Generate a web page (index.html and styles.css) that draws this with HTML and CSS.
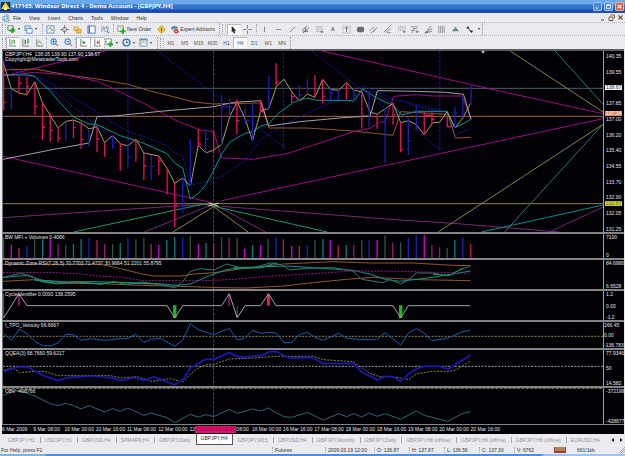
FILE: index.html
```html
<!DOCTYPE html>
<html lang="en">
<head>
<meta charset="utf-8">
<title>417165: Windsor Direct 4 - Demo Account - [GBPJPY,H4]</title>
<link rel="stylesheet" href="styles.css">
</head>
<body>
<header class="titlebar">
  <svg class="app-icon" viewBox="0 0 9 9"><rect width="9" height="9" fill="#25313a"/><path d="M4.5 0L9 7H0z" fill="#f4d12c"/><path d="M3 5h3v3H3z" fill="#fff2a0"/></svg>
  <h1>417165: Windsor Direct 4 - Demo Account - [GBPJPY,H4]</h1>
  <div class="window-buttons">
    <button class="wb" aria-label="Minimize"><svg viewBox="0 0 9 9"><path d="M2 6.5h3" stroke="#fff" stroke-width="1.4"/></svg></button>
    <button class="wb" aria-label="Maximize"><svg viewBox="0 0 9 9"><path d="M2 2.5h5v4.500H2z" fill="none" stroke="#fff"/><path d="M2 2.500h5" stroke="#fff" stroke-width="1.500"/></svg></button>
    <button class="wb close" aria-label="Close"><svg viewBox="0 0 9 9"><path d="M2 2l5 5M7 2L2 7" stroke="#fff" stroke-width="1.400"/></svg></button>
  </div>
</header>

<nav class="menubar">
  <svg class="menu-icon" viewBox="0 0 9 9"><path d="M1 3h5v4H1z" fill="#fff" stroke="#5a9ac8"/><path d="M3 1h4v3" fill="none" stroke="#5fa55f"/><path d="M2 5.500h6v2.500H3z" fill="#e9f4fb" stroke="#3f80b8" stroke-width=".8"/></svg>
  <button>File</button><button>View</button><button>Insert</button><button>Charts</button><button>Tools</button><button>Window</button><button>Help</button>
  <div class="mdi-buttons">
    <button aria-label="Minimize chart"><svg viewBox="0 0 9 9"><path d="M3 7h3" stroke="#7a6040" stroke-width="1.200"/></svg></button>
    <button aria-label="Restore chart"><svg viewBox="0 0 9 9"><path d="M3.500 2h4v3M2 4h4v3.500H2z" fill="none" stroke="#7a6040"/></svg></button>
    <button aria-label="Close chart"><svg viewBox="0 0 9 9"><path d="M2.500 2.500l4 4M6.500 2.500l-4 4" stroke="#7a6040" stroke-width="1.500"/></svg></button>
  </div>
</nav>

<div class="toolbar">
  <i class="grip"></i>
  <button class="tool drop" aria-label="New chart"><svg viewBox="0 0 10 10"><path d="M1 1h6v5H1z" fill="#fff" stroke="#3f8a4c"/><path d="M6 3v6M3 6h6" stroke="#1fa52c" stroke-width="2.200"/></svg></button>
  <button class="tool drop" aria-label="Profiles"><svg viewBox="0 0 10 10"><path d="M1 1h6v5H1z" fill="#cfe4f6" stroke="#5b93c5"/><path d="M3 4h6v5H3z" fill="#fff" stroke="#4c87bd"/></svg></button>
  <i class="sep"></i>
  <div class="group five">
    <button class="tool" aria-label="Market watch"><svg viewBox="0 0 10 10"><path d="M1 1h8v8H1z" fill="#eef6fb" stroke="#5b93c5"/><path d="M3 5l2-2 1 2" stroke="#2a9a3a" fill="none"/><path d="M5 7l2-2 1 2" stroke="#d07a30" fill="none"/></svg></button>
    <button class="tool" aria-label="Data window"><svg viewBox="0 0 10 10"><circle cx="5" cy="5" r="2.500" fill="none" stroke="#777"/><path d="M5 0v4M5 6v4M0 5h4M6 5h4" stroke="#777"/></svg></button>
    <button class="tool" aria-label="Navigator"><svg viewBox="0 0 10 10"><path d="M1 2h4l1 1v3H1z" fill="#f5d26a" stroke="#c49327" stroke-width=".7"/><path d="M4 5h5v4H4z" fill="#f0bf45" stroke="#b58420" stroke-width=".7"/></svg></button>
    <button class="tool" aria-label="Terminal"><svg viewBox="0 0 10 10"><path d="M1 1h8v8H1z" fill="#fff" stroke="#3f77b5"/><path d="M2.500 1v8" stroke="#3f77b5" stroke-width="1.600"/></svg></button>
    <button class="tool" aria-label="Strategy tester"><svg viewBox="0 0 10 10"><path d="M1 1v7M3 1v5M6 1v3M8 1v4" stroke="#9aa0a8"/><circle cx="5.500" cy="5" r="2" fill="#e7f0f8" stroke="#5580a8" stroke-width=".8"/><path d="M7 7l2 2" stroke="#5580a8" stroke-width="1.400"/></svg></button>
  </div>
  <i class="sep"></i>
  <button class="tool text"><svg viewBox="0 0 10 10"><path d="M1 1h6v6H1z" fill="#fff" stroke="#8a8a70"/><path d="M2.500 3h3" stroke="#999"/><path d="M6.500 4v6M3.500 7h6" stroke="#1fa52c" stroke-width="2"/></svg>New Order</button>
  <button class="tool" aria-label="MetaEditor"><svg viewBox="0 0 10 10"><path d="M5 .5L9.500 5 5 9.500.5 5z" fill="#f3c43a" stroke="#c08a1a" stroke-width=".7"/><path d="M5 3v4" stroke="#8a5c10" stroke-width="1.300"/></svg></button>
  <button class="tool text"><svg viewBox="0 0 10 10"><path d="M1 5q0-4 4-4t4 3z" fill="#4f8fce"/><path d="M2 5h4v4z" fill="#e9b26a"/><circle cx="7" cy="7" r="2.500" fill="#d8382c"/><path d="M6 7h2" stroke="#fff"/></svg>Expert Advisors</button>
  <i class="edge"></i><i class="grip"></i>
  <button class="tool pressed" aria-label="Cursor"><svg viewBox="0 0 10 10"><path d="M3 1l5 5H6l1 3-1.500.5L4.300 7 3 8z" fill="#222"/></svg></button>
  <button class="tool" aria-label="Crosshair"><svg viewBox="0 0 10 10"><path d="M5 0v4M5 6v4M0 5h4M6 5h4" stroke="#777"/></svg></button>
  <i class="sep"></i>
  <div class="group draw">
    <button class="tool" aria-label="Vertical line"><svg viewBox="0 0 10 10"><path d="M5 2v6" stroke="#777"/></svg></button>
    <button class="tool" aria-label="Horizontal line"><svg viewBox="0 0 10 10"><path d="M2 5h6" stroke="#888"/></svg></button>
    <button class="tool" aria-label="Trendline"><svg viewBox="0 0 10 10"><path d="M2 8l6-6" stroke="#777"/></svg></button>
    <button class="tool" aria-label="Channel"><svg viewBox="0 0 10 10"><path d="M1 6l6-5M2 9l7-6M2 7h6M5 3v5" stroke="#666"/></svg></button>
    <button class="tool" aria-label="Fibonacci"><svg viewBox="0 0 10 10"><path d="M1 2h8M1 4.500h8M1 7h5" stroke="#999" stroke-dasharray="1.500 .5"/><path d="M7.500 6v3M6 7.500h3" stroke="#666"/></svg></button>
    <button class="tool glyph" aria-label="Text">A</button>
    <button class="tool" aria-label="Text label"><svg viewBox="0 0 10 10"><path d="M1 1h8v8H1z" fill="none" stroke="#999" stroke-dasharray="1 1"/><path d="M3 3h4M5 3v5" stroke="#666"/></svg></button>
    <button class="tool" aria-label="Ellipse"><svg viewBox="0 0 10 10"><rect x="1" y="2" width="8" height="6" rx="2" fill="#6b6b6b"/></svg></button>
    <button class="tool" aria-label="Equidistant channel"><svg viewBox="0 0 10 10"><path d="M1 6l5-4M4 8l5-5M2 9l6-5" stroke="#888"/></svg></button>
    <button class="tool" aria-label="Regression channel"><svg viewBox="0 0 10 10"><path d="M1 8l7-7M3 8l6-4M4 8.500h5" stroke="#888"/></svg></button>
    <button class="tool" aria-label="Time zones"><svg viewBox="0 0 10 10"><path d="M2 1v6M4 1v6M6.500 1v6M9 1v4" stroke="#999" stroke-dasharray="1 .5"/><path d="M8 6v3M6.500 7.500h3" stroke="#8a6a50"/></svg></button>
    <button class="tool" aria-label="Expansion"><svg viewBox="0 0 10 10"><path d="M1 2h8M3 4h5M1 6h5M2 9l3-6" stroke="#888" stroke-width=".9"/><path d="M8 6v3M6.500 7.500h3" stroke="#666"/></svg></button>
    <button class="tool" aria-label="Fan"><svg viewBox="0 0 10 10"><path d="M1 9l7-8M1 9l8-5M1 9l8-2" stroke="#777"/></svg></button>
    <button class="tool" aria-label="Cycle lines"><svg viewBox="0 0 10 10"><path d="M2 1v8M4 1v8M6 1v8M8 1v8" stroke="#888" stroke-width=".9"/></svg></button>
    <button class="tool" aria-label="Triangle"><svg viewBox="0 0 10 10"><path d="M5 2l4 5H1z" fill="#6b8c70"/></svg></button>
    <button class="tool" aria-label="Arrows"><svg viewBox="0 0 10 10"><path d="M1 3.500L3.500 1 5 4z M5 6h4L7.500 9z" fill="#333"/><path d="M3 3l4 5" stroke="#333"/></svg></button>
  </div>
  <i class="caret"></i><i class="edge"></i>
</div>

<div class="toolbar second">
  <i class="grip"></i>
  <div class="group three">
    <button class="tool pressed" aria-label="Bar chart"><svg viewBox="0 0 10 10"><path d="M2 1v8h7" fill="none" stroke="#777"/><path d="M4.500 2v5M7 2v5M6 3h1" stroke="#2a9a3a"/></svg></button>
    <button class="tool" aria-label="Candlesticks"><svg viewBox="0 0 10 10"><path d="M2 1v8h7" fill="none" stroke="#777"/><path d="M4 2h1.500v5H4zM7 1h1.500v5H7z" fill="#2a9a3a"/></svg></button>
    <button class="tool" aria-label="Line chart"><svg viewBox="0 0 10 10"><path d="M2 1v8h7" fill="none" stroke="#777"/><path d="M3 6l2-3 3 4" fill="none" stroke="#5aa860"/></svg></button>
  </div>
  <i class="sep"></i>
  <button class="tool" aria-label="Zoom in"><svg viewBox="0 0 10 10"><path d="M6 6l3 3" stroke="#c79a35" stroke-width="1.600"/><circle cx="4" cy="4" r="3" fill="#d9ecfb" stroke="#3f8ad0" stroke-width="1.200"/><path d="M4 2.500v3M2.500 4h3" stroke="#2f74b8"/></svg></button>
  <button class="tool" aria-label="Zoom out"><svg viewBox="0 0 10 10"><path d="M6 6l3 3" stroke="#c79a35" stroke-width="1.600"/><circle cx="4" cy="4" r="3" fill="#d9ecfb" stroke="#3f8ad0" stroke-width="1.200"/><path d="M2.500 4h3" stroke="#2f74b8"/></svg></button>
  <i class="sep"></i>
  <button class="tool pressed" aria-label="Auto scroll"><svg viewBox="0 0 10 10"><path d="M2 1v8h7" fill="none" stroke="#777"/><path d="M4 3l4 2-4 2z" fill="#2a9a3a"/></svg></button>
  <button class="tool pressed" aria-label="Chart shift"><svg viewBox="0 0 10 10"><path d="M2 1v8h7M7 2v5" fill="none" stroke="#777"/><path d="M6 3v4L3.500 5z" fill="#cf3a2c"/></svg></button>
  <i class="sep"></i>
  <button class="tool drop" aria-label="Indicators"><svg viewBox="0 0 10 10"><path d="M1 1h6v6H1z" fill="#fff" stroke="#7a8a78"/><path d="M6 4v6M3 7h6" stroke="#1fa52c" stroke-width="2"/></svg></button>
  <button class="tool drop" aria-label="Periods"><svg viewBox="0 0 10 10"><circle cx="5" cy="5" r="3.800" fill="#e6f1fb" stroke="#2f6fb5" stroke-width="1.500"/><path d="M5 3v2h2" fill="none" stroke="#345"/></svg></button>
  <button class="tool drop" aria-label="Templates"><svg viewBox="0 0 10 10"><path d="M1 1h8v8H1z" fill="#f4f8fb" stroke="#6d94bd"/><path d="M1 2h8" stroke="#4c87bd" stroke-width="1.500"/><path d="M2 7l2-3 2 2 2-2" fill="none" stroke="#c98a35"/></svg></button>
  <i class="edge"></i><i class="grip"></i>
  <div class="group periods">
    <button class="tool">M1</button><button class="tool">M5</button><button class="tool">M15</button><button class="tool">M30</button><button class="tool">H1</button><button class="tool pressed">H4</button><button class="tool">D1</button><button class="tool">W1</button><button class="tool">MN</button>
  </div>
  <i class="edge"></i>
</div>

<main class="chart">
  <section class="panel main">
    <svg class="plot" viewBox="6 3 1806 543" preserveAspectRatio="none">
      <g class="dash">
        <path class="blue" d="M382 6V305M850 6V298"/><path class="indigo" d="M1321 3V298"/>
        <path class="violet" d="M640 3V546"/>
      </g>
      <path class="slate" d="M6 115H1812"/><path class="orange strong" d="M6 199H1812"/><path class="khaki" d="M6 461H1812"/>
      <g>
        <path class="magenta" d="M6 78L315 3M966 3L1200 55L1500 123L1812 191M6 319L640 459M664 452L1200 337L1812 206"/>
        <path class="magenta dim" d="M6 503L500 470L640 462M664 469L1200 510L1360 520L1680 546M432 546L640 462L796 546M1650 546L1812 471"/>
        <path class="green" d="M218 546L610 462L982 546"/>
        <path class="teal" d="M1446 546L1812 465"/>
        <path class="khaki" d="M518 546L640 470L744 546M1533 3L1812 186M1316 546L1812 223"/>
        <path class="seagreen" d="M1668 3L1812 163M1516 546L1812 223"/>
      </g>
      <g class="dots">
        <path class="blue" d="M6 28L50 65L102 80L382 300M470 3L860 297M935 3L1086 120L1156 173M1086 107L1190 150L1321 180M1200 200L1321 298"/>
        <path class="blue" d="M6 42L60 72L125 87L180 118L240 158L290 185L336 218L382 244L430 260L475 277L500 288L523 308L547 320L570 405L615 395L664 380L700 356L735 332L782 268L835 235L900 200L960 172L1000 155L1062 148L1088 120L1130 130L1180 160"/>
        <path class="blue" d="M1200 150L1240 166L1310 182L1345 190L1368 256L1390 245L1413 238"/>
      </g>
      <g>
        <path class="orange" d="M6 60L102 57L200 75L290 87L382 103L450 123L530 143L580 156L640 162L664 161L782 159L806 234L920 234L1060 243L1180 256L1203 185L1345 193L1368 264L1413 262"/>
        <path class="magenta" d="M6 77L60 72L102 67L200 75L290 94L350 122L430 160L530 213L600 240L640 245L664 324L760 328L860 311L960 279L1060 245L1110 235L1140 217L1156 215L1182 139L1250 134L1300 138H1388L1415 206"/>
        <path class="silver" d="M6 328L170 296L265 279L289 200L340 198L480 184L640 170L700 157L782 152L806 228L900 215L1030 203L1111 198L1133 122L1250 124L1340 127L1392 133L1415 208"/>
        <path class="cyan" d="M6 75H78L102 79L125 103L148 122L172 152L218 201L265 222L289 224L359 257L430 280L500 311L523 339L547 354L570 447L594 430L617 404L640 361L664 313L690 275L735 250L759 245L782 228L806 222L830 194L880 157L920 144L950 151H1040L1062 154L1088 117L1133 145L1182 167L1206 195L1250 184L1343 184L1366 233L1390 222L1413 208"/>
        <path class="sand" d="M8 42L31 116L54 129L78 134L102 95L125 159L172 234L195 214L218 210L241 219L265 237L289 230L312 278L336 256L359 281L382 288L406 267L430 309L475 318L500 355L523 400L547 384L570 408L594 286L617 309L640 300L664 283L690 196L711 155L735 207L757 272L782 182L806 176L830 107L852 88L875 125L898 153L922 132L945 142L968 88L992 118L1016 121L1040 98L1062 121L1086 125L1111 187L1133 192L1157 176L1180 160L1203 218L1227 212L1250 224L1274 254L1300 218L1320 217L1343 185L1366 234L1390 204L1413 160"/>
      </g>
      <g class="bars">
        <path class="bar-blue" d="M31 118V177M195 215V272M265 237V290M336 256V296M382 281V356M452 315V390M547 385V488M570 268V408M616 238V310M664 136V284M688 144V200M735 175V224M757 160V272M806 78V178M898 105V154M922 88V130M992 115V150M1016 122V148M1062 115V153M1108 125V232M1156 174V338M1226 204V314M1250 164V238M1366 172V236M1390 138V202M1415 103V164"/>
        <path class="bar-red" d="M8 32V180M54 78V128M78 82V136M102 98V195M125 158V270M148 191V275M172 232V275M218 212V264M241 215V296M289 230V305M312 278V320M359 280V362M406 268V335M430 309V390M475 318V374M500 353V434M523 400V532M594 238V290M640 244V308M710 148V252M781 152V190M828 40V105M875 124V160M945 76V142M968 88V160M1040 98V148M1086 121V236M1132 192V236M1180 158V224M1203 216V306M1274 185V254M1297 187V220M1343 196V232"/>
        <path class="bar-red" d="M8 157h8M54 99h8M78 109h8M102 169h8M125 232h8M148 241h8M172 265h8M218 233h8M241 268h8M289 267h8M359 283h8M430 348h8M475 333h8M523 465h8M594 282h8M710 212h8M781 185h8M828 97h8M875 140h8M968 139h8M1086 197h8M1180 194h8M1203 298h8M1274 196h28M1297 208h8M1343 230h14"/>
        <path class="bar-blue" d="M336 290h8M382 321h8M452 349h8M547 407h8M616 267h8M664 170h30M735 212h14M898 135h8M992 130h8M1062 135h8M1226 272h8M1366 188h8M1415 115h-6"/>
      </g>
      <path class="pointer" d="M1445 3h12l-6 8z"/>
      <path d="M625 459l30 10M625 468l30-9" stroke="#d7e89a"/>
    </svg>
    <p class="legend">GBPJPY,H4&nbsp; 138.05 138.90 137.90 138.67<br>Copyright@MetatraderTools.com</p>
    <div class="scale"><span>140.35</span><span>139.55</span><span>&nbsp;</span><span>137.85</span><span>137.00</span><span>136.20</span><span>135.40</span><span>134.55</span><span>133.70</span><span>132.90</span><span>132.05</span><span>131.25</span>
      <b class="mark bid">138.67</b><b class="mark level">137.24</b><b class="mark low">132.67</b>
    </div>
  </section>

  <section class="panel volumes">
    <svg class="plot" viewBox="6 12 1806 72" preserveAspectRatio="none">
      <g class="bars">
        <path stroke="#d400d4" d="M31 44V85M148 27V85M475 44V85M594 41V85M733 56V85M781 46V85M875 47V85M991 30V85M1132 30V85M1274 16V85"/>
        <path stroke="#971675" d="M172 42V85M312 42V85M687 23V85M1062 45V85M1179 38V85M1297 46V85M1320 52V85"/>
        <path stroke="#c01c55" d="M54 54V85M289 30V85M452 41V85M640 40V85M850 28V85M898 48V85M1015 46V85M1414 42V85"/>
        <path stroke="#2020b4" d="M78 48V85M265 24V85M382 25V85M547 21V85M828 22V85M922 45V85M1108 30V85M1226 24V85M1250 16V85M1390 22V85"/>
        <path stroke="#087c7c" d="M125 28V85M218 41V85M241 27V85M359 39V85M499 29V85M523 21V85M617 39V85M757 45V85M969 27V85M1039 45V85M1366 30V85"/>
        <path stroke="#31543a" d="M8 22V85M101 27V85M195 44V85M336 42V85M406 28V85M430 24V85M570 17V85M664 21V85M711 24V85M804 27V85M945 30V85M1086 30V85M1156 16V85M1203 37V85M1343 54V85"/>
      </g>
      <path class="violet dash" d="M640 12V84"/>
    </svg>
    <p class="legend">BW MFI + Volumes 0.4066</p>
    <div class="scale"><span>7100</span><span>0</span></div>
  </section>

  <section class="panel zone">
    <svg class="plot" viewBox="6 90 1806 87" preserveAspectRatio="none">
      <path class="violet dash" d="M640 90V177"/>
      <g>
        <path class="orange" d="M6 103H300L360 116L420 131L460 138H540L580 132L640 128L720 117L850 102L1000 95L1110 99L1240 99L1360 106L1413 107"/>
        <path class="orange" d="M6 154L100 149L150 153L200 160L300 161L420 166L540 169L660 173L740 174L850 168L940 158L1040 148L1120 142L1260 149L1413 152"/>
        <path class="cyan" d="M6 143L50 138L80 137L125 151L200 156L280 155L380 158L470 161L530 166L570 162L620 140L680 118L740 112L860 108L940 113L1060 121L1110 132L1156 148L1200 154L1250 148L1300 142L1413 123"/>
        <path class="seagreen" d="M6 142L60 130L90 138L125 156L170 162L230 154L300 163L340 155L380 164L420 156L470 162L523 173L547 155L570 124L600 116L640 120L680 102L730 116L760 113L810 99L840 103L870 120L920 115L1000 113L1060 123L1085 148L1150 158L1170 148L1203 162L1227 149L1250 129L1300 129L1345 138L1380 120L1413 108"/>
        <path class="green" d="M100 150L170 160L230 156L300 162L340 156L400 160L470 162M700 112L780 114L830 98M1300 133L1350 136L1390 114"/>
      </g>
      <path class="violet dots" d="M6 128L150 127L240 132L290 138L360 142L430 152L620 152L700 148L800 139L940 131L1060 123L1200 124L1413 130"/>
    </svg>
    <p class="legend">Dynamic Zone RSI(7,26,5) 70.7703 71.4737 30.9664 51.2201 55.8795</p>
    <div class="scale"><span>84.6986</span><span>6.6528</span></div>
  </section>

  <section class="panel cycle">
    <svg class="plot" viewBox="6 183 1806 87" preserveAspectRatio="none">
      <path class="violet dash" d="M640 183V270"/>
      <path d="M8 192V264" stroke="#168a32"/>
      <path d="M54 193V227M687 193V227" stroke="#861669" stroke-width="6"/><path d="M805 192V227" stroke="#d42655" stroke-width="9"/>
      <path d="M523 226V264M1203 226V264" stroke="#16bd16" stroke-width="10"/><path d="M711 228V263" stroke="#245b34" stroke-width="4"/>
      <path class="silver" d="M8 264L54 191L78 227H500L523 264L547 227H664L687 191L711 263L735 227H781L805 191L828 227H1180L1203 264L1226 227H1413"/>
    </svg>
    <p class="legend">CycleIdentifier 0.0000 138.2595</p>
    <div class="scale"><span>1.2</span><span>0.00</span><span>-1.2</span></div>
  </section>

  <section class="panel velocity">
    <svg class="plot" viewBox="6 276 1806 78" preserveAspectRatio="none">
      <path class="khaki dots" d="M6 319H1812"/><path class="violet dash" d="M640 276V354"/>
      <path class="royal" d="M8 310L31 331L56 297L78 311L101 334L125 347H150L172 339L195 313L218 314L241 331L270 326L312 331L360 326L382 325L406 313L430 337L452 328L480 325L523 349L547 330L570 281L594 299L640 314L687 295L711 330L735 325L757 301L782 310L806 307L828 309L852 338L875 338L898 314L922 307L945 322L970 331L1016 310L1040 324L1086 329H1130L1156 308L1203 345L1227 308L1250 296L1274 309L1297 332L1343 325L1390 305L1413 301"/>
    </svg>
    <p class="legend">I_TPO_Velocity 66.6667</p>
    <div class="scale"><span>166.45</span><span>0.00</span><span>-136.783</span></div>
  </section>

  <section class="panel qqea">
    <svg class="plot" viewBox="6 360 1806 108" preserveAspectRatio="none">
      <path class="silver dots" d="M6 409H1812"/><path class="violet dash" d="M640 360V468"/>
      <path class="khaki dots" d="M8 420L35 414L56 428L100 424L130 424L172 437H330L360 444L410 440L455 454L510 446L547 457L570 432L594 414L617 404L640 403L687 387L760 384L830 379H940L970 389L1060 395L1110 430L1140 440H1180L1227 449L1250 432L1297 424H1345L1370 420L1413 393"/>
      <path class="heavy" d="M8 424L50 411H80L125 436L172 452L200 443L270 438L335 444L360 452L400 443L430 451L460 441L523 464L547 450L570 414L594 399L617 388H640L687 368L711 379L735 382L760 378L782 377L806 366L828 364L852 377L875 385L922 382L945 387L970 400L1062 401L1086 426L1133 450L1157 439L1180 440L1203 454L1227 432L1250 417L1274 409H1320L1345 418L1370 402L1413 376"/>
    </svg>
    <p class="legend">QQEA(3) 68.7660 59.6217</p>
    <div class="scale"><span>77.9346</span><span>50</span><span>14.582</span></div>
  </section>

  <section class="panel obv">
    <svg class="plot" viewBox="6 474 1806 108" preserveAspectRatio="none">
      <path class="khaki dash" d="M6 475H1812"/><path class="violet dash" d="M640 474V582"/>
      <path class="steel" d="M8 496L40 482L60 482L102 498L148 521L172 527L195 520L218 527L241 537L265 527L312 546L336 536L359 544L382 534L430 556L452 549L500 563L523 578L570 553L594 561L617 554L640 560L687 538L711 550L757 537L782 543L805 534L828 548L852 560L875 562L922 547L970 570L1016 551L1040 560L1062 551L1086 561L1108 549L1133 559L1157 551L1203 568L1250 543L1274 556L1345 574L1390 550L1413 545"/>
    </svg>
    <p class="legend">OBV -408766</p>
    <div class="scale"><span>-372199</span><span>-428677</span></div>
  </section>

  <div class="time-axis">
    <span>6 Mar 2009</span><span>9 Mar 08:00</span><span>10 Mar 00:00</span><span>10 Mar 16:00</span><span>11 Mar 08:00</span><span>12 Mar 00:00</span><span>12</span><span class="end">08:00</span><span>16 Mar 00:00</span><span>16 Mar 16:00</span><span>17 Mar 08:00</span><span>18 Mar 00:00</span><span>18 Mar 16:00</span><span>19 Mar 08:00</span><span>20 Mar 00:00</span><span>20 Mar 16:00</span>
    <b class="time-mark">2009.03.13 12:00</b>
  </div>
</main>

<nav class="tabs">
  <a href="#">GBPJPY,H1</a><a href="#">USDJPY,H1</a><a href="#">GBPUSD,H4</a><a href="#">SPMAR9,H4</a><a href="#">GBPJPY,Daily</a><a href="#" class="active" aria-current="page">GBPJPY,H4</a><a href="#">GBPJPY,M15</a><a href="#">GBPUSD,H4</a><a href="#">GBPJPY,Monthly</a><a href="#">GBPJPY,Daily</a><a href="#">GBPJPY,H8 (offline)</a><a href="#">GBPJPY,H6 (offline)</a><a href="#">GBPJPY,H6 (offline)</a><a href="#" class="last">EURUSD,H4</a>
  <div class="tab-scroll"><button aria-label="Scroll left"><svg viewBox="0 0 6 6"><path d="M4 1v4L1.500 3z" fill="#111"/></svg></button><button aria-label="Scroll right"><svg viewBox="0 0 6 6"><path d="M2 1v4l2.500-2z" fill="#111"/></svg></button></div>
</nav>

<footer class="status">
  <span class="help">For Help, press F1</span><span class="profile">Futures</span><span class="date">2009.03.19 12:00</span><span>O: 136.87</span><span>H: 137.87</span><span>L: 136.56</span><span>C: 137.30</span><span>V: 6762</span>
  <span class="signal"><svg viewBox="0 0 12 6"><rect width="12" height="6" fill="#a33a30"/><path d="M2 0v4M4 0v4M6 0v4M8 0v4M10 0v4" stroke="#b7cf7a"/></svg></span>
  <span class="traffic">661/1kb</span>
  <svg class="resize" viewBox="0 0 7 7"><path d="M1 7l6-6M3 7l4-4M5 7l2-2" stroke="#999" stroke-width=".8"/></svg>
</footer>
<div class="taskbar"></div>
</body>
</html>
```
FILE: styles.css
```css
* { box-sizing: border-box; }
body {
  margin: 0;
  min-height: 100vh;
  display: flex;
  flex-direction: column;
  background: #ebeaee;
  color: #333;
  font: 5px/6px "Liberation Sans", Arial, sans-serif;
  overflow: hidden;
}
button {
  margin: 0;
  padding: 0;
  border: 0;
  background: none;
  color: inherit;
  font: inherit;
}
svg { display: block; }

.titlebar {
  height: 13px;
  display: flex;
  align-items: center;
  padding: 0 1px;
  background: linear-gradient(#6cabeb 0, #68a8ea 30%, #3273cb 38%, #2f70c8 70%, #1e48ab 78%, #2350b4 100%);
}
.app-icon { width: 9px; height: 9px; }
.titlebar h1 {
  flex: 1;
  margin: 0 0 0 1px;
  color: #fff;
  font: bold 6px/9px "Noto Sans", "Liberation Sans", sans-serif;
  white-space: nowrap;
}
.window-buttons { display: flex; gap: 2px; }
.wb {
  width: 9px;
  height: 9px;
  border: 1px solid #9cc4f0;
  border-radius: 1px;
  background: #4b86d4;
}
.wb.close { background: #d5623c; border-color: #eab49c; }

.menubar {
  height: 10px;
  display: flex;
  align-items: center;
  gap: 8px;
  padding-left: 2px;
  border-bottom: 1px dotted #b4b6c2;
}
.menu-icon { width: 8px; height: 8px; margin-right: -5px; }
.mdi-buttons { display: flex; margin-left: auto; }
.mdi-buttons button { width: 9px; height: 9px; }

.toolbar {
  height: 13px;
  display: flex;
  align-items: center;
  padding-left: 2px;
  border-bottom: 1px dotted #aeb2be;
}
.toolbar.second { border-bottom: 0; }
.grip {
  width: 4px;
  height: 10px;
  border-left: 1px dotted #8f9bb0;
  border-right: 1px dotted #a9b3c4;
  margin-right: 1px;
}
.sep { width: 1px; height: 10px; margin: 0 1px; border-left: 1px dotted #a3abb8; }
.second .grip, .second .sep { margin: 0; }
.edge { width: 2px; height: 12px; margin-right: 2px; border-right: 1px dotted #8f9bb0; }
.tool {
  min-width: 14px;
  height: 11px;
  display: flex;
  align-items: center;
  justify-content: center;
  color: #555;
}
.tool svg { width: 9px; height: 9px; flex: none; }
.tool.pressed { background: #fafafa; box-shadow: inset 1px 1px #b5b7bf; }
.tool.text { gap: 1px; color: #333; padding: 0 3px 0 2px; }
.tool.glyph { font-weight: bold; }
.tool.drop { width: 17px; justify-content: flex-start; }
.tool.drop::after, .caret {
  content: "";
  margin: 0 1px 0 2px;
  border: 1px solid transparent;
  border-top: 2px solid #333;
  border-bottom: 0;
}
.group { display: grid; grid-auto-flow: column; grid-auto-columns: minmax(0, 1fr); }
.group .tool { min-width: 0; }
.group.five { width: 68px; }
.group.three { width: 40px; }
.group.draw { width: 218px; }
.group.periods { width: 125px; }

.chart {
  display: flex;
  flex-direction: column;
  margin: 0 1px 0 2px;
  background: #020106;
  color: #e4e4e4;
}
.panel {
  position: relative;
  display: flex;
  border-top: 2px solid #858487;
}
.panel.main { border-top-color: #5d5c60; height: 183px; }
.volumes { height: 26px; }
.zone, .cycle { height: 31px; }
.velocity { height: 28px; }
.qqea, .obv { height: 38px; }
.plot {
  flex: 1;
  min-width: 0;
  height: 100%;
  border-left: 1px solid #77767a;
  border-right: 1px solid #a0a0a2;
  fill: none;
  stroke-width: 3;
}
.pointer { fill: #aebfc4; }
.bars { stroke-width: 4; }
.dash path, path.dash { stroke-dasharray: 9 4; shape-rendering: crispEdges; }
.dots path, path.dots { stroke-dasharray: 6 4; }
.blue { stroke: #1e18a0; }
.indigo { stroke: #3b12a0; }
.violet { stroke: #9c1680; }
.magenta { stroke: #9b0f84; }
.magenta.dim { stroke: #742a74; }
.slate { stroke: #476068; shape-rendering: crispEdges; }
.orange { stroke: #93552f; }
.orange.strong { stroke: #a56840; shape-rendering: crispEdges; }
.khaki { stroke: #8c824c; }
.sand { stroke: #a79b60; }
.green { stroke: #1c9a62; }
.teal { stroke: #069090; }
.seagreen { stroke: #327964; }
.cyan { stroke: #079595; }
.silver { stroke: #a3a3a0; }
.royal { stroke: #2059ad; }
.steel { stroke: #326373; }
.heavy { stroke: #1d19b8; stroke-width: 5; }
.bar-blue { stroke: #1e1eb4; }
.bar-red { stroke: #e3105d; }

.legend {
  position: absolute;
  left: 3px;
  top: 1px;
  margin: 0;
  line-height: 5px;
  white-space: nowrap;
}
.scale {
  position: relative;
  width: 20px;
  display: flex;
  flex-direction: column;
  justify-content: space-between;
  padding-left: 2px;
}
.main .scale { padding-top: 2px; }
.velocity .scale { padding-left: 0; }
.mark {
  position: absolute;
  left: 1px;
  width: 17px;
  height: 5px;
  padding-left: 1px;
  font-weight: normal;
  line-height: 5px;
}
.bid { top: 19%; background: #f4f4f4; color: #333; }
.level { top: 33%; background: #e98860; color: #fff; }
.low { top: 83%; background: #cdcb22; color: #665; }

.time-axis {
  position: relative;
  height: 10px;
  display: flex;
  padding-right: 20px;
  border-top: 1px solid #858487;
  line-height: 7px;
}
.time-axis span { flex: 0 0 5.19%; padding-top: 1px; white-space: nowrap; }
.time-axis .end { padding-right: 3px; text-align: right; }
.time-mark {
  position: absolute;
  left: 31%;
  top: 1px;
  padding: 0 1px;
  background: #e3106c;
  color: #7a1244;
  font-weight: normal;
  white-space: nowrap;
}

.tabs {
  height: 11px;
  display: flex;
  align-items: center;
  padding-left: 4px;
}
.tabs a {
  flex: none;
  padding: 0 5px 0 4px;
  border-right: 1px solid #a5a5aa;
  color: #929298;
  text-decoration: none;
}
.tabs .last { border: 0; padding-right: 0; }
.tabs .active {
  align-self: stretch;
  margin-left: -1px;
  border: 1px solid #555;
  border-top: 0;
  background: #fff;
  color: #222;
  line-height: 9px;
}
.tab-scroll { display: flex; flex: none; gap: 2px; margin-left: auto; padding-right: 1px; }
.tab-scroll button { width: 6px; height: 6px; }

.status {
  height: 9px;
  display: flex;
  align-items: center;
}
.status span { width: 35px; padding-left: 2px; border-left: 1px dotted #a8a8ae; white-space: nowrap; }
.status .help { flex: 1; padding-left: 1px; border: 0; }
.status .profile { width: 53px; }
.status .date { width: 49px; }
.status .signal { width: 26px; padding-left: 5px; border: 0; }
.status .signal svg { width: 12px; height: 6px; }
.status .traffic { width: 43px; border: 0; }
.resize { width: 7px; height: 7px; }
.taskbar { flex: 1; min-height: 2px; background: linear-gradient(90deg, #7fb3dc 45px, #4a8fe2 46px, #4a8fe2 540px, #9cc4ee 545px); }
```
